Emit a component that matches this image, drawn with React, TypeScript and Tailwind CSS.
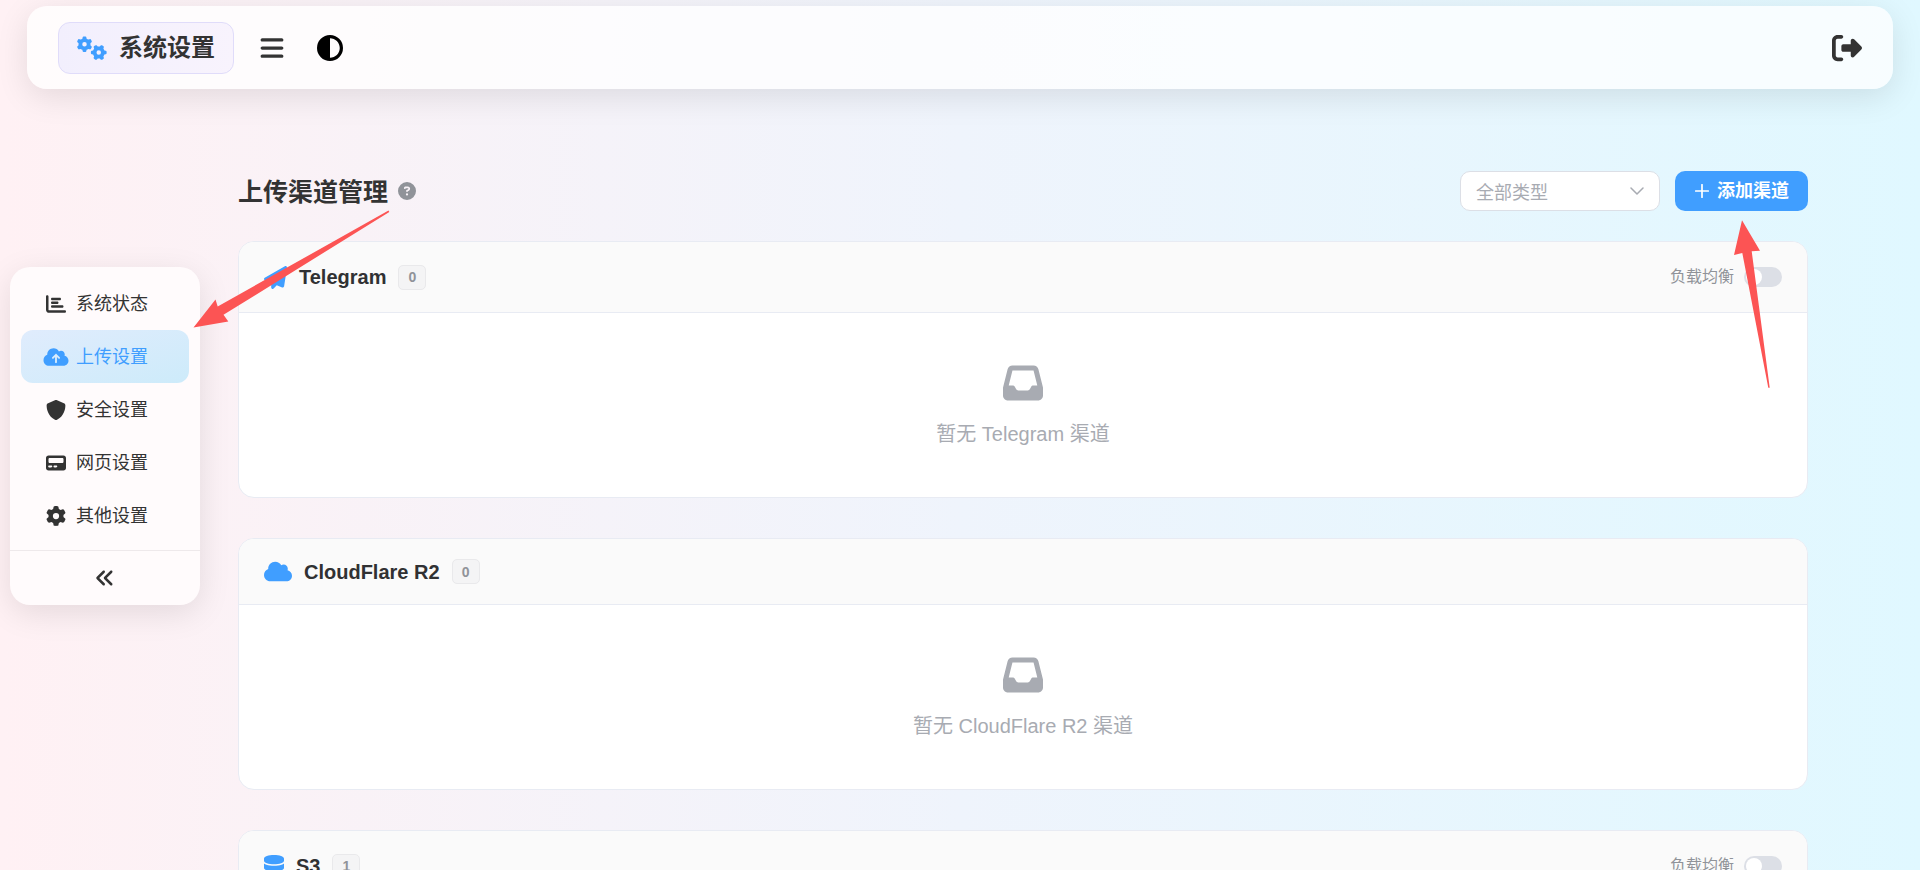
import React from "react";
import {
  FaGears, FaBars, FaCircleHalfStroke, FaRightFromBracket, FaChartBar, FaCloudArrowUp, FaShield,
  FaPager, FaGear, FaAnglesLeft, FaInbox, FaPaperPlane, FaCloud, FaDatabase, FaCircleQuestion,
} from "react-icons/fa6";
import type { IconType } from "react-icons";

const menu: { label: string; icon: IconType; active?: boolean }[] = [
  { label: "系统状态", icon: FaChartBar },
  { label: "上传设置", icon: FaCloudArrowUp, active: true },
  { label: "安全设置", icon: FaShield },
  { label: "网页设置", icon: FaPager },
  { label: "其他设置", icon: FaGear },
];

const channels: { name: string; count: number; icon: IconType; iconSize: string; balance: boolean }[] = [
  { name: "Telegram", count: 0, icon: FaPaperPlane, iconSize: "size-[23px]", balance: true },
  { name: "CloudFlare R2", count: 0, icon: FaCloud, iconSize: "h-[23px] w-7", balance: false },
  { name: "S3", count: 1, icon: FaDatabase, iconSize: "h-[23px] w-5", balance: true },
];

function Header() {
  return (
    <header className="mx-[27px] mt-[6px] flex h-[83px] shrink-0 items-center rounded-[20px] bg-white/75 px-[31px] shadow-[0_8px_32px_rgba(0,0,0,0.1)]">
      <h1 className="flex h-[52px] items-center gap-3 rounded-xl border border-[#e0dcfa] bg-linear-to-r from-[#f2effd] to-[#f8f3fd] px-[18px] text-2xl font-bold text-[#333]">
        <FaGears className="h-6 w-[30px] text-[#409eff]" aria-hidden />
        系统设置
      </h1>
      <button type="button" aria-label="菜单" className="ml-[25px] text-[#333]">
        <FaBars className="size-[26px]" />
      </button>
      <button type="button" aria-label="切换主题" className="ml-8 text-black">
        <FaCircleHalfStroke className="size-[26px]" />
      </button>
      <button type="button" aria-label="退出登录" className="ml-auto text-[#333]">
        <FaRightFromBracket className="size-[30px]" />
      </button>
    </header>
  );
}

function Sidebar() {
  return (
    <aside className="ml-[10px] mt-[178px] w-[190px] shrink-0 self-start rounded-[20px] bg-[#fffbfc] shadow-[0_8px_32px_rgba(0,0,0,0.1)]">
      <nav className="px-[11px] pt-[10px] pb-2">
        {menu.map(({ label, icon: Icon, active }) => (
          <a
            key={label}
            href="#"
            className={
              active
                ? "flex h-[53px] items-center gap-[7px] rounded-xl bg-linear-to-br from-[#e0ecfd] to-[#cdebfa] pl-[22px] text-lg text-[#409eff]"
                : "flex h-[53px] items-center gap-[7px] rounded-xl pl-[22px] text-lg text-[#333]"
            }
          >
            <Icon className="h-5 w-[26px]" aria-hidden />
            {label}
          </a>
        ))}
      </nav>
      <button type="button" aria-label="收起侧栏" className="flex h-[55px] w-full items-center justify-center border-t border-[#eee9eb] text-[#333]">
        <FaAnglesLeft className="size-5" />
      </button>
    </aside>
  );
}

function Channel({ name, count, icon: Icon, iconSize, balance }: (typeof channels)[number]) {
  return (
    <section className="overflow-hidden rounded-2xl border border-[#e8ebf3] bg-white">
      <div className="flex items-center border-b border-[#e8ebf3] bg-[#fafafa] px-[25px] py-5">
        <span className="flex text-[#409eff]">
          <Icon className={iconSize} preserveAspectRatio="xMidYMid meet" aria-hidden />
        </span>
        <h3 className="ml-3 text-xl leading-6 font-bold text-[#303133]">{name}</h3>
        <span className="ml-3 flex h-[25px] min-w-7 items-center justify-center rounded-[5px] border border-[#e9e9eb] bg-[#f4f4f5] text-sm font-bold text-[#909399]">
          {count}
        </span>
        {balance && (
          <label className="ml-auto flex h-[30px] items-center gap-[10px] text-base text-[#909399]">
            负载均衡
            <input
              type="checkbox"
              className="h-5 w-[38px] appearance-none rounded-full bg-[#dcdfe6] p-[2px] before:block before:size-4 before:rounded-full before:bg-white checked:bg-[#409eff] checked:before:ml-[18px]"
            />
          </label>
        )}
      </div>
      <div className="flex flex-col items-center py-[50px] text-[#a8abb2]">
        <FaInbox className="size-10" aria-hidden />
        <p className="pt-[18px] text-xl leading-[26px]">暂无 {name} 渠道</p>
      </div>
    </section>
  );
}

export default function App() {
  return (
    <div className="relative flex h-screen flex-col overflow-hidden bg-linear-to-r from-[#fff1f4] via-[#eff4fc] to-[#e0f8ff] font-['Liberation_Sans','Noto_Sans_CJK_SC',sans-serif]">
      <Header />
      <div className="flex min-h-0 flex-1">
        <Sidebar />
        <main className="ml-[38px] mr-28 min-w-0 flex-1 overflow-y-auto pt-[82px] [scrollbar-width:none]">
          <div className="mb-[30px] flex h-10 items-center">
            <h2 className="pt-[3px] text-[25px] font-bold text-[#333]">上传渠道管理</h2>
            <button type="button" aria-label="帮助" className="ml-[10px] text-[#909399]">
              <FaCircleQuestion className="size-[18px]" />
            </button>
            <div className="ml-auto grid w-[200px] items-center">
              <select
                aria-label="渠道类型"
                className="col-start-1 row-start-1 h-10 w-full appearance-none rounded-[10px] border border-[#dcdfe6] bg-white px-[15px] pt-[3px] text-lg text-[#a8abb2]"
              >
                <option>全部类型</option>
              </select>
              <svg viewBox="0 0 14 8" className="pointer-events-none col-start-1 row-start-1 mr-4 h-2 w-[14px] justify-self-end" fill="none" stroke="#a8abb2" strokeWidth="1.5" strokeLinecap="round" strokeLinejoin="round" aria-hidden>
                <path d="M1 1l6 6 6-6" />
              </svg>
            </div>
            <button type="button" className="ml-[15px] flex h-10 items-center gap-2 rounded-[10px] bg-[#409eff] pr-[19px] pl-5 text-lg font-bold text-white">
              <svg viewBox="0 0 14 14" className="size-[14px]" fill="none" stroke="currentColor" strokeWidth="1.7" strokeLinecap="round" aria-hidden>
                <path d="M7 .7v12.6M.7 7h12.6" />
              </svg>
              添加渠道
            </button>
          </div>
          <div className="flex flex-col gap-10 pb-10">
            {channels.map((c) => (
              <Channel key={c.name} {...c} />
            ))}
          </div>
        </main>
      </div>
      <svg viewBox="0 0 197 118" className="pointer-events-none absolute top-[210px] left-[193px] h-[118px] w-[197px]" fill="#fc5454" aria-hidden>
        <path d="M.5 117.5 22.5 89.5 24.7 96.5 195.5.5 196.3 2 30.5 104.8 35.3 111.5z" />
      </svg>
      <svg viewBox="0 0 36 168" className="pointer-events-none absolute top-[220px] right-[150px] h-[168px] w-9" fill="#fc5454" aria-hidden>
        <path d="M8 .3 26 30.7 17.7 31.3 35.7 167.7H34.3L8.3 33 0 35z" />
      </svg>
    </div>
  );
}
